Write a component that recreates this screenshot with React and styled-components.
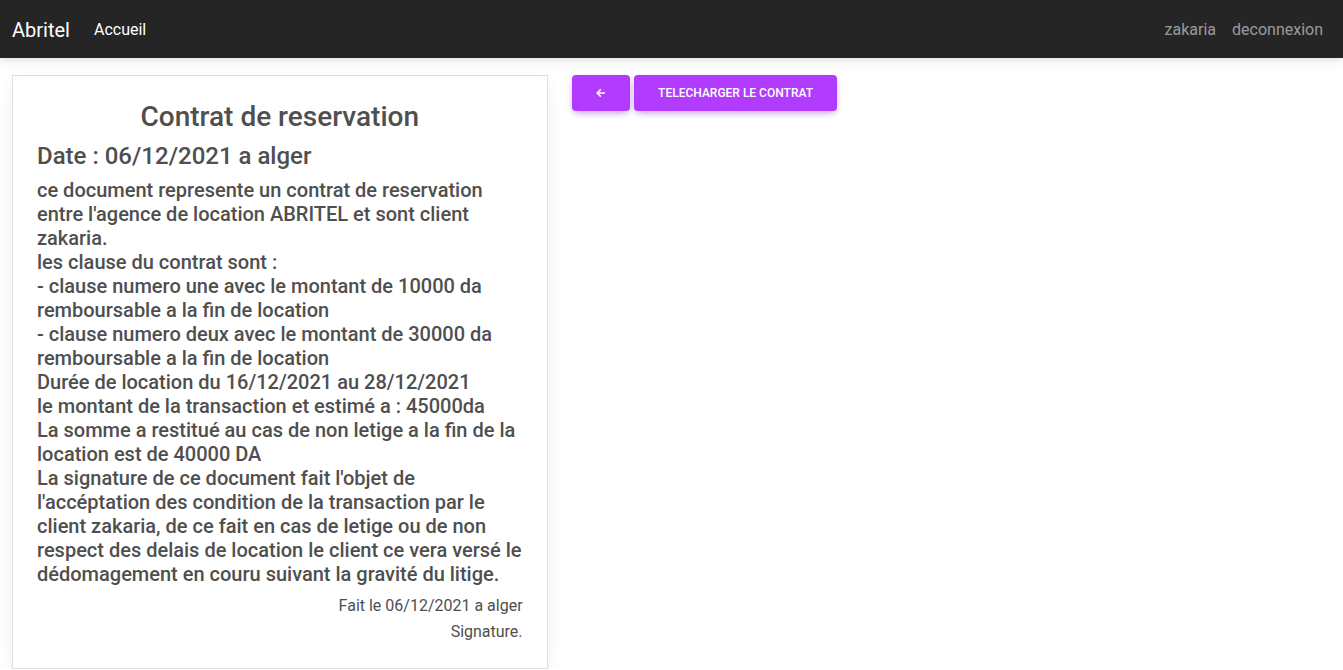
import React from "react";
import styled, { createGlobalStyle } from "styled-components";

const GlobalStyle = createGlobalStyle`
  * { box-sizing: border-box; }
  html, body { margin: 0; padding: 0; background: #fff; }
  body {
    font-family: Roboto, "Liberation Sans", sans-serif;
    color: #4f4f4f;
    font-size: 16px;
    line-height: 1.5;
  }
`;

const Navbar = styled.nav`
  height: 58px;
  background: #252525;
  display: flex;
  align-items: center;
  justify-content: space-between;
  padding: 2px 12px 0;
  box-shadow: 0 4px 12px 0 rgba(0, 0, 0, 0.07), 0 2px 4px rgba(0, 0, 0, 0.05);
  position: relative;
  z-index: 2;
`;

const NavGroup = styled.div`
  display: flex;
  align-items: center;
`;

const Brand = styled.a`
  font-size: 20px;
  line-height: 30px;
  color: #fff;
  margin-right: 16px;
  text-decoration: none;
`;

const NavLink = styled.a`
  font-size: 16px;
  line-height: 24px;
  padding: 8px;
  color: ${(p) => (p.$active ? "#fff" : "rgba(255,255,255,0.55)")};
  text-decoration: none;
`;

const Main = styled.main`
  display: grid;
  grid-template-columns: 5fr 7fr;
  padding: 17px 0 0;
`;

const Col = styled.div`
  padding: 0 12px;
`;

const Card = styled.div`
  border: 1px solid #e0e0e0;
  background: #fff;
  padding: 24px;
  box-shadow: 0 2px 15px -3px rgba(0, 0, 0, 0.07), 0 10px 20px -2px rgba(0, 0, 0, 0.04);
`;

const Title = styled.h3`
  margin: 0 0 8px;
  font-size: 28px;
  line-height: 1.2;
  font-weight: 500;
  text-align: center;
`;

const DateLine = styled.h4`
  margin: 0 0 8px;
  font-size: 24px;
  line-height: 1.2;
  font-weight: 500;
`;

const Body = styled.h5`
  margin: 0 0 8px;
  font-size: 20px;
  line-height: 24px;
  font-weight: 500;
`;

const Footer = styled.p`
  margin: 0 0 2px;
  text-align: right;
  font-size: 16px;
  line-height: 24px;
  &:last-child { margin-bottom: 0; }
`;

const Actions = styled.div`
  display: flex;
  gap: 4px;
`;

const Button = styled.button`
  height: 36px;
  border: 0;
  border-radius: 4px;
  background: #b23cfd;
  color: #fff;
  font-family: Roboto, "Liberation Sans", sans-serif;
  font-size: 12px;
  font-weight: 500;
  text-transform: uppercase;
  padding: 0 24.5px;
  display: inline-flex;
  align-items: center;
  justify-content: center;
  width: ${(p) => p.$w || "auto"};
  box-shadow: 0 4px 9px -4px rgba(178, 60, 253, 0.6), 0 2px 6px rgba(0,0,0,0.12);
  cursor: pointer;
`;

const ArrowLeft = () => (
  <svg width="11" height="10" viewBox="0 0 11 10" fill="none">
    <path d="M10.2 5H1.6M5.2 1.2L1.4 5l3.8 3.8" stroke="#fff" strokeWidth="1.8" strokeLinecap="square" />
  </svg>
);

const lines = [
  "ce document represente un contrat de reservation entre l'agence de location ABRITEL et sont client zakaria.",
  "les clause du contrat sont :",
  "- clause numero une avec le montant de 10000 da remboursable a la fin de location",
  "- clause numero deux avec le montant de 30000 da remboursable a la fin de location",
  "Durée de location du 16/12/2021 au 28/12/2021",
  "le montant de la transaction et estimé a : 45000da",
  "La somme a restitué au cas de non letige a la fin de la location est de 40000 DA",
  "La signature de ce document fait l'objet de l'accéptation des condition de la transaction par le client zakaria, de ce fait en cas de letige ou de non respect des delais de location le client ce vera versé le dédomagement en couru suivant la gravité du litige.",
];

export default function App() {
  return (
    <>
      <GlobalStyle />
      <Navbar>
        <NavGroup>
          <Brand href="#">Abritel</Brand>
          <NavLink href="#" $active>Accueil</NavLink>
        </NavGroup>
        <NavGroup>
          <NavLink href="#">zakaria</NavLink>
          <NavLink href="#">deconnexion</NavLink>
        </NavGroup>
      </Navbar>
      <Main>
        <Col>
          <Card>
            <Title>Contrat de reservation</Title>
            <DateLine>Date : 06/12/2021 a alger</DateLine>
            <Body>
              {lines.map((l, i) => (
                <React.Fragment key={i}>
                  {l}
                  {i < lines.length - 1 && <br />}
                </React.Fragment>
              ))}
            </Body>
            <Footer>Fait le 06/12/2021 a alger</Footer>
            <Footer>Signature.</Footer>
          </Card>
        </Col>
        <Col>
          <Actions>
            <Button $w="58px" aria-label="retour"><ArrowLeft /></Button>
            <Button>Telecharger le contrat</Button>
          </Actions>
        </Col>
      </Main>
    </>
  );
}
